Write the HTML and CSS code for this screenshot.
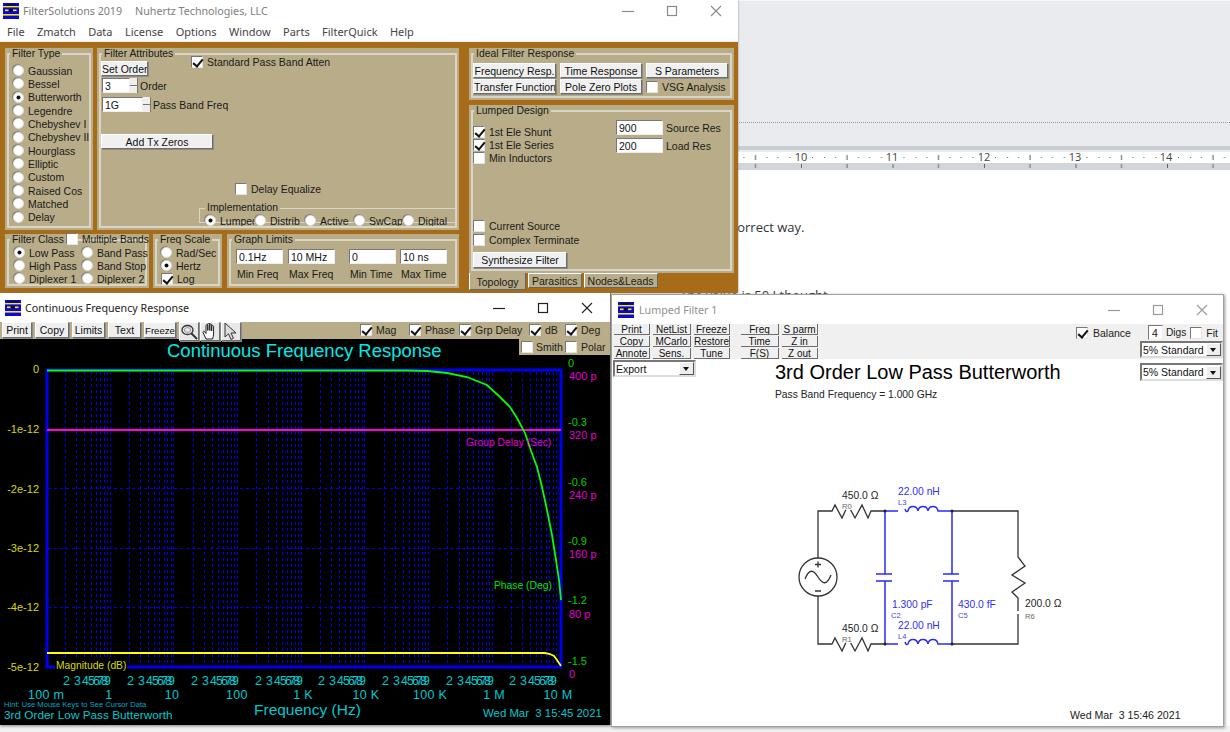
FILE: index.html
```html
<!DOCTYPE html>
<html lang="en">
<head>
<meta charset="utf-8">
<title>FilterSolutions 2019</title>
<link rel="stylesheet" href="styles.css">
</head>
<body>
<svg class="defs" width="0" height="0" aria-hidden="true">
  <symbol id="logo" viewBox="0 0 16 16">
    <rect width="16" height="16" fill="#0808e0"/>
    <rect x="0" y="3" width="16" height="1.4" fill="#ffe800"/>
    <rect x="0" y="11" width="16" height="1.6" fill="#ffe800"/>
    <rect x="3" y="1" width="10" height="1.2" fill="#111"/>
    <rect x="2" y="6.5" width="3.5" height="1.6" fill="#ffe800"/>
    <rect x="10" y="6.5" width="3.5" height="1.6" fill="#ffe800"/>
    <rect x="6" y="6" width="3.5" height="2.6" fill="#111"/>
  </symbol>
  <symbol id="w-min" viewBox="0 0 12 12"><path d="M0 6.5H12" fill="none" stroke="currentColor" stroke-width="1.2"/></symbol>
  <symbol id="w-max" viewBox="0 0 12 12"><rect x="1.5" y="1.5" width="9" height="9" fill="none" stroke="currentColor" stroke-width="1.2"/></symbol>
  <symbol id="w-x" viewBox="0 0 12 12"><path d="M1 1L11 11M11 1L1 11" fill="none" stroke="currentColor" stroke-width="1.1"/></symbol>
</svg>

<main class="doc">
  <div class="doc-top"><div class="dots"></div></div>
  <svg class="ruler" width="1230" height="26" viewBox="0 146 1230 26">
    <defs>
      <pattern id="rtick" x="801" y="146" width="91.5" height="26" patternUnits="userSpaceOnUse">
        <rect x="11" y="11" width="1" height="1" fill="#555"/>
        <rect x="23" y="11" width="1" height="1" fill="#555"/>
        <rect x="34" y="11" width="1" height="1" fill="#555"/>
        <rect x="45.5" y="9" width="1" height="5" fill="#555"/>
        <rect x="57" y="11" width="1" height="1" fill="#555"/>
        <rect x="68" y="11" width="1" height="1" fill="#555"/>
        <rect x="80" y="11" width="1" height="1" fill="#555"/>
        <rect x="0" y="18" width="1" height="4" fill="#666"/>
        <rect x="45.5" y="18" width="1" height="4" fill="#666"/>
      </pattern>
    </defs>
    <rect x="0" y="146" width="1230" height="4" fill="#c9ccd2"/>
    <rect x="0" y="150" width="1230" height="2" fill="#e9ebee"/>
    <rect x="0" y="152" width="1230" height="11" fill="#fff"/>
    <rect x="0" y="163" width="1230" height="7" fill="#d2d5da"/>
    <rect x="0" y="170" width="1230" height="2" fill="#fff"/>
    <rect x="738" y="146" width="492" height="26" fill="url(#rtick)"/>
    <text class="ruler-n" x="801" y="161">10</text>
    <text class="ruler-n" x="892" y="161">11</text>
    <text class="ruler-n" x="984" y="161">12</text>
    <text class="ruler-n" x="1075" y="161">13</text>
    <text class="ruler-n" x="1166" y="161">14</text>
  </svg>
  <p class="doc-line one">correct way.</p>
  <p class="doc-line two">The value is 50 I thought</p>
</main>

<!-- Main window -->
<section class="win win-main">
  <header class="titlebar tb-main">
    <svg class="logo"><use href="#logo"/></svg>
    <span class="t1">FilterSolutions 2019</span><span class="t2">Nuhertz Technologies, LLC</span>
    <div class="wbtns">
      <svg><use href="#w-min"/></svg><svg><use href="#w-max"/></svg><svg><use href="#w-x"/></svg>
    </div>
  </header>
  <nav class="menu">
    <span>File</span><span>Zmatch</span><span>Data</span><span>License</span><span>Options</span><span>Window</span><span>Parts</span><span>FilterQuick</span><span>Help</span>
  </nav>
  <div class="desk">
    <div class="left">
      <div class="left-top">
        <div class="panel p-type">
          <fieldset>
            <legend>Filter Type</legend>
            <div class="radios">
              <label><input type="radio" name="ft" class="rd">Gaussian</label>
              <label><input type="radio" name="ft" class="rd">Bessel</label>
              <label><input type="radio" name="ft" class="rd" checked>Butterworth</label>
              <label><input type="radio" name="ft" class="rd">Legendre</label>
              <label><input type="radio" name="ft" class="rd">Chebyshev I</label>
              <label><input type="radio" name="ft" class="rd">Chebyshev II</label>
              <label><input type="radio" name="ft" class="rd">Hourglass</label>
              <label><input type="radio" name="ft" class="rd">Elliptic</label>
              <label><input type="radio" name="ft" class="rd">Custom</label>
              <label><input type="radio" name="ft" class="rd">Raised Cos</label>
              <label><input type="radio" name="ft" class="rd">Matched</label>
              <label><input type="radio" name="ft" class="rd">Delay</label>
            </div>
          </fieldset>
        </div>
        <div class="panel p-attr">
          <fieldset>
            <legend>Filter Attributes</legend>
            <div class="attr-1">
              <button class="btn b-order">Set Order</button>
              <label class="chk std"><input type="checkbox" class="ck" checked>Standard Pass Band Atten</label>
            </div>
            <div class="attr-2">
              <input class="tx w28" value="3"><span class="spin"></span><span>Order</span>
            </div>
            <div class="attr-3">
              <input class="tx w41" value="1G"><span class="spin"></span><span>Pass Band Freq</span>
            </div>
            <button class="btn b-zero">Add Tx Zeros</button>
            <label class="chk delay"><input type="checkbox" class="ck">Delay Equalize</label>
            <fieldset class="impl">
              <legend>Implementation</legend>
              <div class="impl-row">
                <label class="i-lump"><input type="radio" name="im" class="rd" checked>Lumped</label>
                <label><input type="radio" name="im" class="rd">Distrib</label>
                <label><input type="radio" name="im" class="rd">Active</label>
                <label><input type="radio" name="im" class="rd">SwCap</label>
                <label><input type="radio" name="im" class="rd">Digital</label>
              </div>
            </fieldset>
          </fieldset>
        </div>
      </div>
      <div class="left-bot">
        <div class="panel p-class">
          <fieldset>
            <legend>Filter Class</legend>
            <label class="chk multi"><input type="checkbox" class="ck">Multiple Bands</label>
            <div class="class-grid">
              <label><input type="radio" name="fc" class="rd" checked>Low Pass</label>
              <label><input type="radio" name="fc" class="rd">Band Pass</label>
              <label><input type="radio" name="fc" class="rd">High Pass</label>
              <label><input type="radio" name="fc" class="rd">Band Stop</label>
              <label><input type="radio" name="fc" class="rd">Diplexer 1</label>
              <label><input type="radio" name="fc" class="rd">Diplexer 2</label>
            </div>
          </fieldset>
        </div>
        <div class="panel p-freq">
          <fieldset>
            <legend>Freq Scale</legend>
            <div class="radios scale">
              <label><input type="radio" name="fs" class="rd">Rad/Sec</label>
              <label><input type="radio" name="fs" class="rd" checked>Hertz</label>
              <label class="logrow"><input type="checkbox" class="ck" checked>Log</label>
            </div>
          </fieldset>
        </div>
        <div class="panel p-lim">
          <fieldset>
            <legend>Graph Limits</legend>
            <div class="lim-grid">
              <input class="tx" value="0.1Hz"><input class="tx" value="10 MHz"><input class="tx" value="0"><input class="tx" value="10 ns">
              <span>Min Freq</span><span>Max Freq</span><span>Min Time</span><span>Max Time</span>
            </div>
          </fieldset>
        </div>
      </div>
    </div>
    <div class="right">
      <div class="panel p-ideal">
        <fieldset>
          <legend>Ideal Filter Response</legend>
          <div class="ideal-grid">
            <button class="btn">Frequency Resp.</button><button class="btn">Time Response</button><button class="btn">S Parameters</button>
            <button class="btn">Transfer Function</button><button class="btn">Pole Zero Plots</button>
            <label class="chk"><input type="checkbox" class="ck">VSG Analysis</label>
          </div>
        </fieldset>
      </div>
      <div class="panel p-lumped">
        <fieldset>
          <legend>Lumped Design</legend>
          <div class="lump-top">
            <div class="lump-checks">
              <label class="chk"><input type="checkbox" class="ck" checked>1st Ele Shunt</label>
              <label class="chk"><input type="checkbox" class="ck" checked>1st Ele Series</label>
              <label class="chk"><input type="checkbox" class="ck">Min Inductors</label>
            </div>
            <div class="lump-res">
              <input class="tx" value="900"><span>Source Res</span>
              <input class="tx" value="200"><span>Load Res</span>
            </div>
          </div>
          <div class="lump-bot">
            <label class="chk"><input type="checkbox" class="ck">Current Source</label>
            <label class="chk"><input type="checkbox" class="ck">Complex Terminate</label>
            <button class="btn b-syn">Synthesize Filter</button>
          </div>
        </fieldset>
      </div>
      <div class="tabs">
        <span class="tab active">Topology</span><span class="tab">Parasitics</span><span class="tab">Nodes&amp;Leads</span>
      </div>
    </div>
  </div>
</section>

<!-- Plot window -->
<section class="win win-plot">
  <header class="titlebar tb-plot">
    <svg class="logo"><use href="#logo"/></svg>
    <span class="t1">Continuous Frequency Response</span>
    <div class="wbtns">
      <svg><use href="#w-min"/></svg><svg><use href="#w-max"/></svg><svg><use href="#w-x"/></svg>
    </div>
  </header>
  <div class="plot-tools">
    <button class="btn pt-b w30">Print</button>
    <button class="btn pt-b w34">Copy</button>
    <button class="btn pt-b w33">Limits</button>
    <button class="btn pt-b w33">Text</button>
    <button class="btn pt-b w32 frz">Freeze</button>
    <button class="btn ico" aria-label="Zoom"><svg width="18" height="18" viewBox="0 0 18 18"><ellipse cx="7.5" cy="7" rx="5.5" ry="4.5" fill="none" stroke="#333" stroke-width="1.3"/><ellipse cx="7.5" cy="7" rx="3.2" ry="2.4" fill="none" stroke="#999"/><path d="M11.5 10.5L17 16" stroke="#333" stroke-width="2"/></svg></button>
    <button class="btn ico" aria-label="Pan"><svg width="18" height="19" viewBox="0 0 18 19"><path d="M5 17L2 10.5C1.6 9.3 3 8.8 3.7 9.8L5 11.5V3.5C5 2.3 6.8 2.3 6.8 3.5V8.5V2C6.8 .8 8.8 .8 8.8 2V8.5V2.7C8.8 1.5 10.7 1.5 10.7 2.7V9V4.5C10.7 3.3 12.6 3.3 12.6 4.5V12C12.6 14 12 15.5 11.5 17Z" fill="#fff" stroke="#222" stroke-width="1"/></svg></button>
    <button class="btn ico" aria-label="Pointer"><svg width="16" height="19" viewBox="0 0 16 19"><path d="M2 1V15L5.5 11.8L8 17.5L10.5 16.3L8 11H13Z" fill="#ddd" stroke="#333"/></svg></button>
    <div class="plot-checks">
      <label class="chk"><input type="checkbox" class="ck" checked>Mag</label>
      <label class="chk"><input type="checkbox" class="ck" checked>Phase</label>
      <label class="chk"><input type="checkbox" class="ck" checked>Grp Delay</label>
      <label class="chk"><input type="checkbox" class="ck" checked>dB</label>
      <label class="chk"><input type="checkbox" class="ck" checked>Deg</label>
    </div>
  </div>
  <div class="smith">
    <label class="chk"><input type="checkbox" class="ck">Smith</label>
    <label class="chk"><input type="checkbox" class="ck">Polar</label>
  </div>
  <svg class="plot" width="610" height="386" viewBox="0 339 610 386">
    <defs>
      <g id="decade">
        <path d="M19.2 372V666M30.4 372V666M38.4 372V666M44.5 372V666M49.6 372V666M53.8 372V666M57.5 372V666M60.8 372V666M63.7 372V666" class="grid"/>
      </g>
    </defs>
    <path class="grid" d="M48 488.5H560M48 548.5H560M48 607.5H560"/>
    <use href="#decade" x="46.5"/><use href="#decade" x="110.2"/><use href="#decade" x="173.9"/><use href="#decade" x="237.6"/>
    <use href="#decade" x="301.3"/><use href="#decade" x="365"/><use href="#decade" x="428.7"/><use href="#decade" x="492.4"/>
    <rect x="47" y="370" width="514" height="297" class="frame"/>
    <path class="l-mag" d="M47 430H561"/>
    <path class="l-yel" d="M47 653H545L550 654L554 656L557 660L561 666"/>
    <path class="l-grn" d="M47 370.5H407L427 371L447 373L467 377L487 385L500 397L510 407L517 418L525 433L530 448L537 467L542 487L547 510L552 535L556 560L559 580L561 600"/>

    <text class="pt-title" x="167" y="357">Continuous Frequency Response</text>
    <g class="yl">
      <text x="39" y="373">0</text><text x="39" y="433">-1e-12</text><text x="39" y="493">-2e-12</text>
      <text x="39" y="552">-3e-12</text><text x="39" y="611">-4e-12</text><text x="39" y="671">-5e-12</text>
    </g>
    <g class="gr">
      <text x="568" y="367">0</text><text x="568" y="426">-0.3</text><text x="568" y="486">-0.6</text>
      <text x="568" y="545">-0.9</text><text x="568" y="604">-1.2</text><text x="568" y="665">-1.5</text>
    </g>
    <g class="mg">
      <text x="569" y="380">400 p</text><text x="569" y="439">320 p</text><text x="569" y="499">240 p</text>
      <text x="569" y="558">160 p</text><text x="569" y="618">80 p</text><text x="569" y="678">0</text>
    </g>
    <rect x="55" y="660" width="72" height="9" fill="#000"/>
    <text class="lbl-y" x="56" y="669">Magnitude (dB)</text>
    <text class="lbl-m" x="466" y="446">Group Delay (Sec)</text>
    <text class="lbl-g" x="494" y="589">Phase (Deg)</text>
    <g class="dg">
      <text x="63 74 82 88 93 97 101 104" y="685">23456789</text>
      <text x="127 138 146 152 157 161 165 168" y="685">23456789</text>
      <text x="191 202 210 216 221 225 229 232" y="685">23456789</text>
      <text x="255 266 274 280 285 289 293 296" y="685">23456789</text>
      <text x="318 329 337 343 348 352 356 359" y="685">23456789</text>
      <text x="382 393 401 407 412 416 420 423" y="685">23456789</text>
      <text x="446 457 465 471 476 480 484 487" y="685">23456789</text>
      <text x="509 520 528 534 539 543 547 550" y="685">23456789</text>
    </g>
    <g class="dc">
      <text x="46" y="699">100 m</text><text x="109" y="699">1</text><text x="172" y="699">10</text><text x="237" y="699">100</text>
      <text x="303" y="699">1 K</text><text x="366" y="699">10 K</text><text x="430" y="699">100 K</text><text x="494" y="699">1 M</text><text x="558" y="699">10 M</text>
    </g>
    <text class="hint" x="4" y="707">Hint: Use Mouse Keys to See Cursor Data</text>
    <text class="sub" x="4" y="719">3rd Order Low Pass Butterworth</text>
    <text class="xt" x="254" y="715">Frequency (Hz)</text>
    <text class="stamp" x="483" y="717" xml:space="preserve">Wed Mar  3 15:45 2021</text>
  </svg>
</section>

<!-- Lumped filter window -->
<section class="win win-lump">
  <header class="titlebar tb-lump">
    <svg class="logo"><use href="#logo"/></svg>
    <span class="t1">Lumped Filter 1</span>
    <div class="wbtns">
      <svg><use href="#w-min"/></svg><svg><use href="#w-max"/></svg><svg><use href="#w-x"/></svg>
    </div>
  </header>
  <div class="lp-tools">
    <div class="lp-col c36"><button class="btn lb">Print</button><button class="btn lb">Copy</button><button class="btn lb">Annote</button></div>
    <div class="lp-col c37"><button class="btn lb">NetList</button><button class="btn lb">MCarlo</button><button class="btn lb">Sens.</button></div>
    <div class="lp-col c36"><button class="btn lb">Freeze</button><button class="btn lb">Restore</button><button class="btn lb">Tune</button></div>
    <div class="lp-col c37 gap-l"><button class="btn lb">Freq</button><button class="btn lb">Time</button><button class="btn lb">F(S)</button></div>
    <div class="lp-col c36"><button class="btn lb">S parm</button><button class="btn lb">Z in</button><button class="btn lb">Z out</button></div>
    <div class="lp-right">
      <div class="lp-row">
        <label class="chk bal"><input type="checkbox" class="ck" checked>Balance</label>
        <input class="tx dig" value="4"><span class="digs">Digs</span>
        <label class="chk fit"><input type="checkbox" class="ck">Fit</label>
      </div>
      <div class="combo"><span>5% Standard</span><i></i></div>
    </div>
  </div>
  <div class="lp-head">
    <div class="combo export"><span>Export</span><i></i></div>
    <div class="heading">
      <h1>3rd Order Low Pass Butterworth</h1>
      <p>Pass Band Frequency = 1.000 GHz</p>
    </div>
    <div class="combo second"><span>5% Standard</span><i></i></div>
  </div>
  <svg class="schem" width="612" height="323" viewBox="612 404 612 323">
    <g class="wire">
      <path d="M818 558V511H832L835 505L842 518L848 505L855 518L862 505L868 518L871 511H885"/>
      <path d="M818 596V644H832L835 638L842 651L848 638L855 651L862 638L868 651L871 644H885"/>
      <path d="M952 511H1018V557L1025 566L1012 575L1025 583L1012 592L1018 598V611M1018 614V644H952"/>
      <circle cx="818" cy="577" r="19"/>
      <path d="M805 579C809 569 813 569 818 577C823 585 827 585 831 575"/>
      <path d="M815 564.5H821M818 561.5V567.5M815 591H821"/>
    </g>
    <g class="blue">
      <path d="M885 511V574M876 574H892M876 581H892M885 581V644"/>
      <path d="M952 511V574M943 574H959M943 581H959M952 581V644"/>
      <path d="M885 511H898M905 509C906 512 907 512 908 511C909 505 917 505 918 511C919 505 927 505 928 511C929 505 937 505 938 511H952"/>
      <path d="M885 644H898M905 642C906 645 907 645 908 644C909 638 917 638 918 644C919 638 927 638 928 644C929 638 937 638 938 644H952"/>
    </g>
    <circle cx="885" cy="511" r="1.5" class="node"/><circle cx="952" cy="511" r="1.5" class="node"/>
    <circle cx="885" cy="644" r="1.5" class="node"/><circle cx="952" cy="644" r="1.5" class="node"/>
    <text class="v-k" x="842" y="499">450.0 Ω</text>
    <text class="r-k" x="842" y="509">R0</text>
    <text class="v-b" x="898" y="495">22.00 nH</text>
    <text class="r-b" x="898" y="505">L3</text>
    <text class="v-b" x="892" y="608">1.300 pF</text>
    <text class="r-b" x="891" y="618">C2</text>
    <text class="v-b" x="958" y="608">430.0 fF</text>
    <text class="r-b" x="958" y="618">C5</text>
    <text class="v-b" x="898" y="629">22.00 nH</text>
    <text class="r-b" x="898" y="639">L4</text>
    <text class="v-k" x="842" y="632">450.0 Ω</text>
    <text class="r-k" x="842" y="642">R1</text>
    <text class="v-k" x="1025" y="607">200.0 Ω</text>
    <text class="r-k" x="1025" y="619">R6</text>
    <text class="when" x="1070" y="719" xml:space="preserve">Wed Mar  3 15:46 2021</text>
  </svg>
</section>
</body>
</html>
```

FILE: styles.css
```css
* { box-sizing: border-box; }
html, body { margin: 0; padding: 0; }
body {
  width: 1230px;
  height: 732px;
  overflow: hidden;
  position: relative;
  background: #f2f2f2;
  font-family: "Liberation Sans", Arial, sans-serif;
}
.defs { position: absolute; }

/* Document behind the windows */
.doc { background: #fff; height: 726px; }
.doc-top { height: 146px; background: #e9ebee; border-top: 1px solid #f6f7f8; padding-top: 121px; }
.dots { border-top: 1px dotted #9a9ea6; }
.ruler { display: block; }
.ruler-n { font: 11px "Open Sans", sans-serif; fill: #444; text-anchor: middle; }
.doc-line { margin: 0; font: 13px "Open Sans", sans-serif; color: #333; line-height: 18px; }
.doc-line.one { margin: 46px 0 0 731px; }
.doc-line.two { margin: 50px 0 0 680px; }

/* Windows */
.win { position: absolute; display: flex; flex-direction: column; background: #fff; }
.win-main { left: 0; top: 0; width: 738px; height: 293px; box-shadow: 0 0 2px #888; }
.win-plot { left: 0; top: 293px; width: 611px; height: 432px; background: #000; border-right: 1px solid #777; box-shadow: 0 1px 3px #777; z-index: 2; }
.win-lump { left: 611px; top: 294px; width: 613px; height: 433px; border: 1px solid #a0a0a0; box-shadow: 1px 1px 3px #999; z-index: 3; }

.titlebar { display: flex; align-items: center; background: #fff; flex: none; font: 10.7px "Noto Sans", sans-serif; }
.logo { width: 16px; height: 16px; flex: none; }
.wbtns { margin-left: auto; display: flex; }
.wbtns svg { width: 12px; height: 12px; }

.tb-main { height: 21px; padding-left: 3px; color: #808080; }
.tb-main .t1 { margin-left: 4px; }
.tb-main .t2 { margin-left: 13px; }
.tb-main .wbtns { gap: 32px; margin-right: 16px; color: #8a8a8a; }

.tb-plot { height: 29px; padding-left: 5px; color: #222; }
.tb-plot .t1 { margin-left: 4px; }
.tb-plot .wbtns { gap: 32px; margin-right: 17px; color: #222; }

.tb-lump { height: 29px; padding-left: 6px; color: #909090; }
.tb-lump .t1 { margin-left: 5px; }
.tb-lump .wbtns { gap: 32px; margin-right: 15px; color: #9a9a9a; }

.menu { height: 20px; display: flex; align-items: center; gap: 12.4px; padding-left: 7px; background: #fff; flex: none; font: 11px "Noto Sans", sans-serif; color: #444; }

/* Shared controls */
.btn {
  margin: 0; padding: 0;
  background: #f0f0f0;
  border: 1px solid;
  border-color: #fff #6d6d6d #6d6d6d #fff;
  box-shadow: 1px 1px 0 #8b8b8b;
  font: 10.5px "Liberation Sans", sans-serif;
  color: #111;
  text-align: center;
  white-space: nowrap;
  overflow: hidden;
}
.tx {
  margin: 0; padding: 0 0 0 2px;
  background: #fff;
  border: 1px solid;
  border-color: #777 #eee #eee #777;
  font: 10.5px "Liberation Sans", sans-serif;
  color: #111;
  height: 15px;
}
.ck, .rd {
  appearance: none;
  -webkit-appearance: none;
  margin: 0;
  flex: none;
  background: #fff;
  position: relative;
}
.ck {
  width: 12px; height: 12px;
  border: 1px solid;
  border-color: #777 #e4e4e4 #e4e4e4 #777;
}
.ck:checked::after {
  content: "";
  position: absolute;
  left: 3px; top: 0;
  width: 4px; height: 8px;
  border: solid #111;
  border-width: 0 2px 2px 0;
  transform: rotate(40deg);
}
.rd {
  width: 11px; height: 11px;
  border-radius: 50%;
  border: 1px solid #ddd;
  box-shadow: -1px -1px 0 #8a8a80;
}
.rd:checked::after {
  content: "";
  position: absolute;
  left: 3px; top: 3px;
  width: 3px; height: 3px;
  border-radius: 50%;
  background: #111;
  box-shadow: 0 0 0 .5px #111;
}
.chk { display: flex; align-items: center; gap: 4px; white-space: nowrap; }

/* Main desk */
.desk {
  flex: 1;
  display: flex;
  background: #a66c1a;
  border-top: 1px solid #f0f0f0;
  padding: 6px 4px 2px 4px;
  font-size: 10.5px;
  color: #1a1a1a;
  min-height: 0;
}
.left { width: 456px; display: flex; flex-direction: column; gap: 4px; }
.left-top { display: flex; gap: 4px; height: 182px; }
.left-bot { display: flex; gap: 4px; height: 54px; margin-left: 1px; }
.right { margin-left: 9px; width: 265px; display: flex; flex-direction: column; }

.panel { background: #b8ad88; display: flex; padding: 0 2px 2px; }
.panel fieldset {
  flex: 1;
  margin: 0; padding: 0;
  min-width: 0;
  border: 2px solid #d9d6c8;
  position: relative;
}
.panel legend { margin-left: 1px; padding: 0 2px; line-height: 12px; font-size: 10.4px; white-space: nowrap; }

.p-type { width: 88px; margin-left: 1px; }
.radios { display: grid; grid-auto-rows: 13.33px; padding: 4px 0 0 4px; }
.radios label { display: flex; align-items: center; gap: 4px; white-space: nowrap; }

.p-attr { width: 362px; }
.attr-1 { display: flex; margin: 1px 0 0 0; }
.b-order { width: 47px; height: 15px; }
.std { margin: -5px 0 0 43px; height: 12px; }
.attr-2, .attr-3 { display: flex; align-items: center; margin-left: 1px; }
.attr-2 { margin-top: 2px; }
.attr-3 { margin-top: 4px; }
.w28 { width: 28px; }
.w41 { width: 41px; }
.spin {
  width: 8px; height: 15px; flex: none;
  background: linear-gradient(#eee 0 45%, #777 45% 55%, #eee 55%);
  border-right: 1px solid #777;
  margin-right: 2px;
}
.b-zero { display: block; width: 112px; height: 15px; margin: 22px 0 0 0; }
.delay { margin: 34px 0 0 134px; }
.panel .impl { margin: 7px 0 0 98px; width: 258px; height: 21px; border-width: 1px; }
.impl legend { margin-left: 5px; }
.impl-row { display: grid; grid-template-columns: 50px 50px 49px 49px 1fr; padding-left: 4px; height: 12px; }
.impl-row label { display: flex; align-items: center; gap: 4px; white-space: nowrap; overflow: hidden; padding: 1px 0 0 1px; }

.p-class { width: 144px; }
.multi { position: absolute; left: 57px; top: -13px; gap: 4px; font-size: 10.2px; }
.class-grid { display: grid; grid-template-columns: 68px 1fr; grid-auto-rows: 13.2px; padding: 0 0 0 5px; }
.class-grid label { display: flex; align-items: center; gap: 4px; white-space: nowrap; }

.p-freq { width: 69px; }
.scale { padding: 0 0 0 4px; grid-auto-rows: 13.2px; }

.p-lim { width: 232px; margin-left: 1px; }
.lim-grid { display: grid; grid-template-columns: 52px 61px 51px 1fr; padding: 3px 0 0 5px; row-gap: 4px; }
.lim-grid .tx { width: 47px; height: 15px; }
.lim-grid span { padding-left: 1px; }

.p-ideal { height: 52px; }
.ideal-grid { display: grid; grid-template-columns: 83px 82px 82px; column-gap: 4px; grid-auto-rows: 15px; row-gap: 1px; padding: 3px 0 0 0; }

.p-lumped { height: 168px; margin-top: 5px; }
.lump-top { display: flex; height: 92px; }
.lump-checks { display: grid; grid-auto-rows: 13.4px; width: 143px; padding: 8px 0 0 0; }
.lump-res { display: grid; grid-template-columns: 50px 1fr; grid-auto-rows: 15px; row-gap: 3px; align-items: center; padding: 3px 0 0 0; }
.lump-res .tx { width: 47px; }
.lump-bot { display: grid; justify-items: start; grid-auto-rows: 14px; padding: 10px 0 0 0; }
.b-syn { width: 94px; height: 16px; margin: 5px 0 0 0; }
.tabs { display: flex; gap: 2px; }
.tab { background: #b8ad88; height: 15px; padding: 1px 3px; border: 1px solid; border-color: #fff #666 #666 #fff; white-space: nowrap; font-size: 10.5px; }
.tab.active { height: 17px; padding: 3px 6.5px; border-top: 0; }

/* Plot window */
.plot-tools { height: 17px; flex: none; background: #b8ad88; display: flex; align-items: flex-start; padding: 0 0 0 2px; position: relative; z-index: 2; }
.pt-b { height: 16px; margin-right: 3px; background: #efefef; }
.w30 { width: 30px; } .w34 { width: 34px; } .w33 { width: 33px; } .w32 { width: 32px; }
.frz { margin-right: 3px; font-size: 9.6px; }
.ico { width: 20px; height: 19px; margin-right: 1px; display: flex; align-items: center; justify-content: center; background: #e8e8e8; flex: none; }
.plot-checks { display: grid; grid-template-columns: 49px 50px 70px 36px auto; position: absolute; left: 360px; top: 2px; font-size: 10.5px; color: #222; }
.smith { position: absolute; left: 519px; top: 45px; width: 91px; height: 17px; background: #b8ad88; display: flex; gap: 3px; align-items: center; padding-left: 2px; font-size: 10.5px; color: #222; z-index: 2; }
.smith .chk:first-child { width: 41px; gap: 3px; }
.plot { display: block; flex: none; }
.plot text { font-family: "Liberation Sans", sans-serif; }
.grid { fill: none; stroke: #0000e6; stroke-width: 1; stroke-dasharray: 3 3; shape-rendering: crispEdges; }
.frame { fill: none; stroke: #0000f0; stroke-width: 3; }
.l-mag { stroke: #ff00e0; stroke-width: 1.8; fill: none; }
.l-yel { stroke: #ffff00; stroke-width: 1.8; fill: none; }
.l-grn { stroke: #00ff00; stroke-width: 1.8; fill: none; }
.pt-title { font-size: 18.5px; fill: #00eaea; }
.yl text { font-size: 11px; fill: #d8d800; text-anchor: end; }
.gr text { font-size: 11px; fill: #00d000; }
.mg text { font-size: 11px; fill: #e000d0; }
.lbl-y { font-size: 10.3px; fill: #dada00; }
.lbl-m { font-size: 10.3px; fill: #e000d0; }
.lbl-g { font-size: 10.3px; fill: #00e000; }
.dg text { font-size: 12.5px; fill: #00c8d0; }
.dc text { font-size: 12.5px; fill: #00c8d0; text-anchor: middle; letter-spacing: .3px; }
.hint { font-size: 7.6px; fill: #00a8c8; }
.sub { font-size: 11.8px; fill: #00c8d0; }
.xt { font-size: 15.5px; fill: #00c8d0; }
.stamp { font-size: 11.4px; fill: #00c8d0; }

/* Lumped filter window */
.lp-tools { height: 35px; flex: none; background: #f0f0f0; display: flex; padding-left: 2px; font-size: 10px; color: #222; }
.lp-col { display: grid; grid-auto-rows: 12px; margin-right: 3px; }
.c36 { width: 36px; } .c37 { width: 38px; }
.gap-l { margin-left: 8px; }
.lb { font-size: 10px; height: 11px; line-height: 9px; background: #f0f0f0; border-width: 0 1px 1px 0; box-shadow: none; }
.lp-right { margin-left: auto; width: 165px; display: flex; flex-direction: column; align-items: flex-end; }
.lp-row { display: flex; align-items: center; height: 17px; width: 165px; font-size: 10.5px; }
.bal { margin-left: 18px; gap: 5px; }
.dig { width: 15px; height: 15px; margin-left: 17px; padding-left: 3px; }
.digs { margin-left: 3px; font-size: 10.2px; }
.fit { margin-left: 4px; gap: 4px; }
.combo {
  display: flex; align-items: center; justify-content: space-between;
  width: 83px; height: 17px;
  background: #fff;
  border: 2px solid;
  border-color: #777 #ddd #ddd #777;
  font-size: 10.5px; color: #111;
  padding-left: 1px;
  flex: none;
}
.combo i {
  width: 15px; height: 13px;
  background: #eee;
  border: 1px solid; border-color: #fff #555 #555 #fff;
  position: relative;
}
.combo i::after {
  content: "";
  position: absolute; left: 3px; top: 4px;
  border: 3.5px solid transparent;
  border-top: 4px solid #111;
  border-bottom: 0;
}
.lp-head { display: flex; height: 45px; flex: none; align-items: flex-start; padding: 2px 0 0 1px; position: relative; }
.export { margin-top: -1px; }
.heading { margin-left: 79px; }
.heading h1 { margin: 0; font-size: 20px; font-weight: 400; line-height: 23px; color: #000; white-space: nowrap; }
.heading p { margin: 5px 0 0; font-size: 10.3px; line-height: 12px; color: #222; white-space: nowrap; }
.second { margin-left: auto; margin-top: 2px; height: 18px; }
.schem { display: block; flex: none; }
.schem text { font-family: "Liberation Sans", sans-serif; }
.wire path, .wire circle { fill: none; stroke: #333; stroke-width: 1.3; }
.blue path { fill: none; stroke: #2a2aff; stroke-width: 1.5; }
.node { fill: #222; }
.v-k { font-size: 10.3px; fill: #222; }
.r-k { font-size: 7.6px; fill: #666; paint-order: stroke; stroke: #fff; stroke-width: 2px; }
.v-b { font-size: 10.3px; fill: #3030f0; paint-order: stroke; stroke: #fff; stroke-width: 2px; }
.r-b { font-size: 7.6px; fill: #4848e0; }
.when { font-size: 10.6px; fill: #222; }
```
